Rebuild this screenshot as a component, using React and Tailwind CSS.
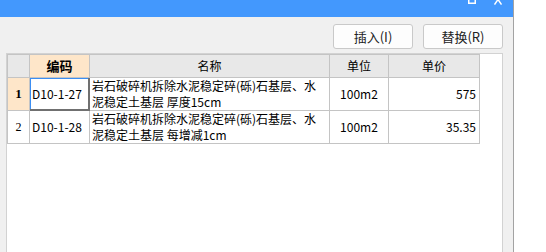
import React from 'react';

const font = { fontFamily: '"Noto Sans CJK SC", "Liberation Sans", sans-serif' };

const rows = [
  {
    no: '1',
    code: 'D10-1-27',
    name: ['岩石破碎机拆除水泥稳定碎(砾)石基层、水', '泥稳定土基层 厚度15cm'],
    unit: '100m2',
    price: '575',
    active: true,
  },
  {
    no: '2',
    code: 'D10-1-28',
    name: ['岩石破碎机拆除水泥稳定碎(砾)石基层、水', '泥稳定土基层 每增减1cm'],
    unit: '100m2',
    price: '35.35',
    active: false,
  },
];

const cell = 'border-r border-b border-[#c4c4c4]';

export default function App() {
  return (
    <div className="w-[546px] h-[252px] bg-white overflow-hidden flex items-start" style={font}>
      <div className="w-[514px] h-full flex flex-col bg-[#f0f0f0] border-r border-[#a3a3a3]">
        {/* Title bar */}
        <div className="h-[17px] shrink-0 bg-[#4398fd] flex justify-end items-start gap-[18px] pr-[11px] overflow-hidden">
          <svg width="8" height="10" viewBox="0 0 8 10" className="-mt-[6px]">
            <rect x="0.75" y="0.75" width="6.5" height="8.5" fill="none" stroke="white" strokeWidth="1.5" />
          </svg>
          <svg width="8" height="11" viewBox="0 0 8 11" className="-mt-[6px]">
            <path d="M0.5 0.5 L7.5 10.5 M7.5 0.5 L0.5 10.5" stroke="white" strokeWidth="1.5" />
          </svg>
        </div>

        {/* Toolbar */}
        <div className="h-[36px] shrink-0 flex justify-end items-start pt-[7px] pr-[10px] gap-[10px]">
          <button className="w-[80px] h-[25px] bg-[#fdfdfd] border border-[#c9c9c9] rounded-[3px] text-[13px] text-[#222] leading-none">
            插入(I)
          </button>
          <button className="w-[80px] h-[25px] bg-[#fdfdfd] border border-[#c9c9c9] rounded-[3px] text-[13px] text-[#222] leading-none">
            替换(R)
          </button>
        </div>

        {/* Table panel */}
        <div className="flex-1 ml-[6px] mr-[10px] bg-white border border-b-0 border-[#d2d2d2]">
          <div className="grid grid-cols-[22px_60px_240px_59px_91px] w-max border-l border-t border-[#c4c4c4] text-[12px] text-black">
            <div className={`${cell} h-[23px] bg-[#e8e8e8]`} />
            <div className={`${cell} h-[23px] bg-[#fee6c9] flex items-center justify-center text-[13px] font-bold`}>
              编码
            </div>
            <div className={`${cell} h-[23px] bg-[#e8e8e8] flex items-center justify-center`}>名称</div>
            <div className={`${cell} h-[23px] bg-[#e8e8e8] flex items-center justify-center`}>单位</div>
            <div className={`${cell} h-[23px] bg-[#e8e8e8] flex items-center justify-center`}>单价</div>

            {rows.map((r) => (
              <React.Fragment key={r.no}>
                <div
                  className={`${cell} h-[33px] flex items-center justify-center ${
                    r.active ? 'bg-[#fee6c9] font-bold text-[13px]' : 'bg-white'
                  }`}
                  style={{ fontFamily: '"Liberation Serif", serif' }}
                >
                  {r.no}
                </div>
                {r.active ? (
                  <div className="h-[33px] flex items-center pl-[2px] border-r-2 border-b-2 border-[#707070] shadow-[inset_1px_1px_0_#3b8ef3]">
                    {r.code}
                  </div>
                ) : (
                  <div className={`${cell} h-[33px] flex items-center pl-[2px]`}>{r.code}</div>
                )}
                <div className={`${cell} h-[33px] pl-[2px] leading-[16px] whitespace-nowrap overflow-hidden`}>
                  <div>{r.name[0]}</div>
                  <div>{r.name[1]}</div>
                </div>
                <div className={`${cell} h-[33px] flex items-center justify-center`}>{r.unit}</div>
                <div className={`${cell} h-[33px] flex items-center justify-end pr-[3px]`}>{r.price}</div>
              </React.Fragment>
            ))}
          </div>
        </div>
      </div>
    </div>
  );
}
